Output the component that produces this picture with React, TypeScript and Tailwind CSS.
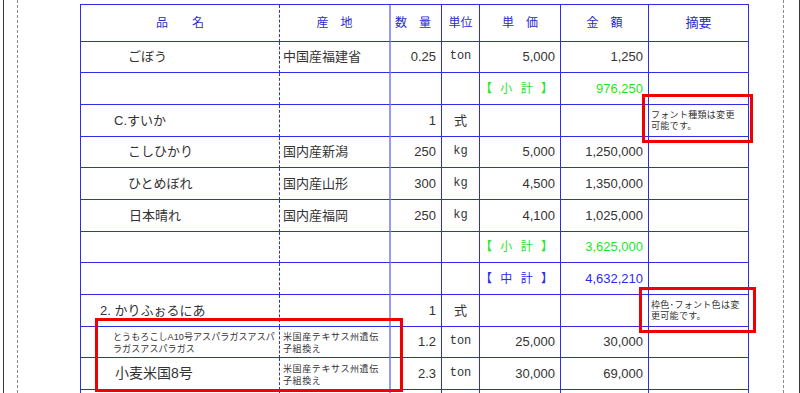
const green = "text-[#1ee61e]";
const blue = "text-[#2a2af5]";

type Row = {
  name?: string;
  nameCls?: string;
  origin?: string;
  originSmall?: boolean;
  qty?: string;
  unit?: string;
  price?: string;
  amount?: string;
  note?: string[];
  sum?: { label: string; value: string; color: string };
};

const rows: Row[] = [
  { name: "ごぼう", nameCls: "pl-[47px] text-[13px]", origin: "中国産福建省", qty: "0.25", unit: "ton", price: "5,000", amount: "1,250" },
  { sum: { label: "小", value: "976,250", color: green } },
  { name: "C.すいか", nameCls: "pl-[33px] text-[13px]", qty: "1", unit: "式", note: ["フォント種類は変更", "可能です。"] },
  { name: "こしひかり", nameCls: "pl-[47px] text-[13px]", origin: "国内産新潟", qty: "250", unit: "kg", price: "5,000", amount: "1,250,000" },
  { name: "ひとめぼれ", nameCls: "pl-[47px] text-[13px]", origin: "国内産山形", qty: "300", unit: "kg", price: "4,500", amount: "1,350,000" },
  { name: "日本晴れ", nameCls: "pl-[48px] text-[13px]", origin: "国内産福岡", qty: "250", unit: "kg", price: "4,100", amount: "1,025,000" },
  { sum: { label: "小", value: "3,625,000", color: green } },
  { sum: { label: "中", value: "4,632,210", color: blue } },
  { name: "2. かりふぉるにあ", nameCls: "pl-[19px] text-[13px]", qty: "1", unit: "式", note: ["枠色･フォント色は変", "更可能です。"] },
  {
    name: "とうもろこしA10号アスパラガスアスパ\nラガスアスパラガス",
    nameCls: "pl-[32px] pt-[2px] text-[9px] leading-[12px] tracking-[0.1px] whitespace-pre-line",
    origin: "米国産テキサス州遺伝\n子組換え",
    originSmall: true,
    qty: "1.2",
    unit: "ton",
    price: "25,000",
    amount: "30,000",
  },
  { name: "小麦米国8号", nameCls: "pl-[34px] text-[14px]", origin: "米国産テキサス州遺伝\n子組換え", originSmall: true, qty: "2.3", unit: "ton", price: "30,000", amount: "69,000" },
  {},
];

const line = "border-[#2e2ee6]";

const Header = () => (
  <>
    <div className={`flex items-center justify-center border-b border-r ${line} [border-right-style:dashed] text-[12px] text-[#2a2ad0] whitespace-pre`}>品　　名</div>
    <div className="flex items-center justify-center border-b border-r-2 border-b-[#2e2ee6] border-r-[#9a9af2] text-[12px] text-[#2a2ad0]">産　地</div>
    <div className={`flex items-center justify-center border-b border-r ${line} text-[12px] text-[#2a2ad0] pr-[6px]`}>数　量</div>
    <div className={`flex items-center justify-center border-b border-r ${line} text-[12px] text-[#2a2ad0]`}>単位</div>
    <div className={`flex items-center justify-center border-b border-r ${line} text-[12px] text-[#2a2ad0]`}>単　価</div>
    <div className={`flex items-center justify-center border-b border-r ${line} text-[12px] text-[#2a2ad0]`}>金　額</div>
    <div className={`flex items-center justify-center border-b border-r ${line} text-[13px] text-[#2a2ad0]`}>摘要</div>
  </>
);

const TableRow = ({ r }: { r: Row }) => (
  <>
    <div className={`flex items-center border-b border-r ${line} [border-right-style:dashed] ${r.nameCls ?? ""}`}>{r.name}</div>
    <div
      className={`flex items-center border-b border-r-2 border-b-[#2e2ee6] border-r-[#9a9af2] pl-[3px] whitespace-pre-line ${
        r.originSmall ? "text-[9px] leading-[12px] tracking-[0.6px] pt-[2px]" : "text-[13px]"
      }`}
    >
      {r.origin}
    </div>
    <div className={`flex items-center justify-end border-b border-r ${line} pr-[5px] text-[13px]`}>{r.qty}</div>
    <div
      className={`flex items-center justify-center border-b border-r ${line} ${
        r.unit === "式" ? "text-[13px]" : "font-['Liberation_Mono',monospace] text-[12px] pb-[2px]"
      }`}
    >
      {r.unit}
    </div>
    <div className={`flex items-center justify-end border-b border-r ${line} pr-[5px] text-[13px]`}>
      {r.sum ? (
        <span className={`w-full text-center whitespace-nowrap text-[12px] tracking-[2.5px] ${r.sum.color}`}>【 {r.sum.label} 計 】</span>
      ) : (
        r.price
      )}
    </div>
    <div className={`flex items-center justify-end border-b border-r ${line} pr-[5px] text-[13px] ${r.sum ? r.sum.color : ""}`}>
      {r.sum ? r.sum.value : r.amount}
    </div>
    <div className={`flex flex-col justify-center border-b border-r ${line} pl-[2px] text-[9px] leading-[11px] tracking-[0.3px]`}>
      {r.note?.map((t) => (
        <span key={t}>{t}</span>
      ))}
    </div>
  </>
);

export default function App() {
  return (
    <div className="relative flex w-[800px] h-[393px] overflow-hidden bg-white font-['Liberation_Sans','Noto_Sans_CJK_JP',sans-serif] text-[#333333]">
      <div className="ml-[3px] w-[797px] h-full border-x border-[#3a3a3a] flex">
        <div className="ml-[13px] mr-[15px] flex-1 h-full border-x border-dashed border-[#8a8a8a]">
          <div className="ml-[62px] mt-[4px] w-[669px] grid grid-cols-[199px_111px_51px_38px_81px_88px_100px] grid-rows-[37px_31px_32px_32px_31px_32px_32px_31px_32px_32px_31px_32px_32px] border-t border-l border-[#2e2ee6]">
            <Header />
            {rows.map((r, i) => (
              <TableRow key={i} r={r} />
            ))}
          </div>
        </div>
      </div>

      {/* red highlight boxes over the table */}
      <div className="absolute left-[642px] top-[94px] w-[111px] h-[49px] border-[3px] border-[#f00000]" />
      <div className="absolute left-[639px] top-[287px] w-[117px] h-[46px] border-[3px] border-[#f00000]" />
      <div className="absolute left-[95px] top-[318px] w-[308px] h-[74px] border-[3px] border-[#f00000]" />
    </div>
  );
}
